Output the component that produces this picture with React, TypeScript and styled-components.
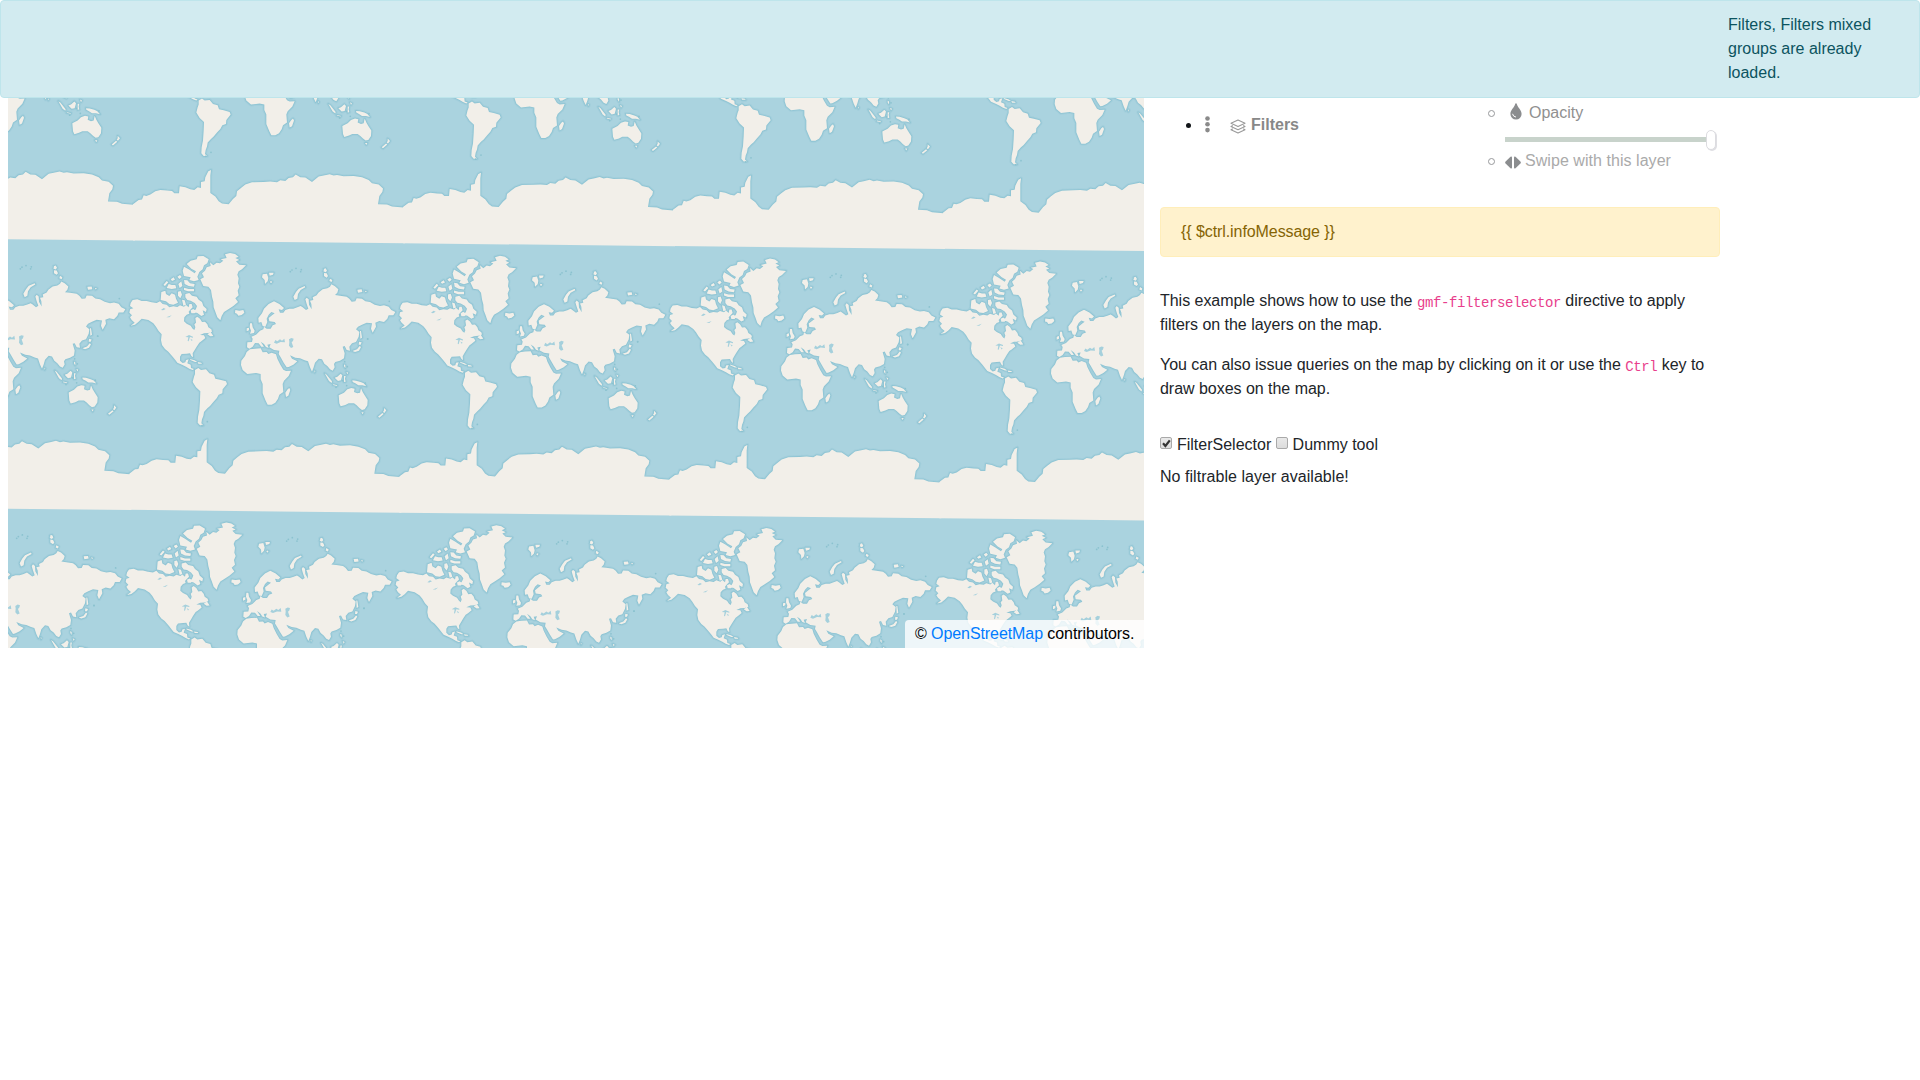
import React from "react";
import styled, { createGlobalStyle } from "styled-components";

const GlobalStyle = createGlobalStyle`
  *, *::before, *::after { box-sizing: border-box; }
  html, body { margin: 0; padding: 0; background: #fff; }
  body {
    font-family: "Liberation Sans", Arial, sans-serif;
    font-size: 16px;
    line-height: 24px;
    color: #212529;
  }
`;

const Page = styled.div`
  display: flex;
  gap: 16px;
  padding-left: 8px;
`;

const Notification = styled.div`
  position: fixed;
  top: 0;
  left: 0;
  right: 0;
  z-index: 10;
  display: flex;
  justify-content: flex-end;
  padding: 12px 20px 12px 0;
  border: 1px solid #bee5eb;
  border-radius: 4px;
  background: #d2ebf0;
  color: #0c5460;
`;

const NotificationText = styled.div`
  width: 171px;
`;

const MapPane = styled.div`
  position: relative;
  flex: none;
  width: 1136px;
  height: 648px;
  overflow: hidden;
  background: #aad3df;
`;

const MapCanvas = styled.svg`
  display: block;
`;

const Attribution = styled.div`
  position: absolute;
  right: 0;
  bottom: 0;
  height: 28px;
  width: 239px;
  padding: 2px 0 2px 10px;
  border-radius: 4px 0 0 0;
  background: rgba(255, 255, 255, 0.8);
  color: #000;
  letter-spacing: -0.08px;
  white-space: nowrap;
`;

const Link = styled.a`
  color: #007bff;
  text-decoration: none;
`;

const Side = styled.div`
  display: flex;
  flex-direction: column;
  width: 560px;
  padding-top: 101px;
`;

const LayerTree = styled.div`
  display: flex;
  justify-content: space-between;
  height: 106px;
`;

const TreeRow = styled.div`
  display: flex;
  align-items: center;
  height: 24px;
  margin-top: 12px;
  padding-left: 26px;
`;

const Disc = styled.span`
  width: 5px;
  height: 5px;
  border-radius: 50%;
  background: #111518;
`;

const DotsIcon = styled.svg`
  width: 5px;
  height: 17px;
  margin: -1px 0 0 14px;
`;

const StackIcon = styled.svg`
  width: 16px;
  height: 15px;
  margin: 2px 5px 0 20px;
`;

const GroupName = styled.span`
  font-weight: 700;
  color: #888;
`;

const Options = styled.div`
  display: flex;
  flex-direction: column;
  width: 232px;
`;

const OptionRow = styled.div<{ $color: string; $spacing?: number }>`
  display: flex;
  align-items: center;
  height: 24px;
  color: ${(p) => p.$color};
  letter-spacing: ${(p) => p.$spacing ?? 0}px;
`;

const Ring = styled.span`
  flex: none;
  width: 7px;
  height: 7px;
  margin-top: 1px;
  border: 1px solid #97999b;
  border-radius: 50%;
`;

const DropIcon = styled.svg`
  width: 12px;
  height: 17px;
  margin: -3px 7px 0 15px;
`;

const SwipeIcon = styled.svg`
  width: 16px;
  height: 13px;
  margin: 2px 4px 0 10px;
`;

const Slider = styled.div`
  display: flex;
  align-items: center;
  height: 24px;
  margin-left: 17px;
  padding-top: 5px;
`;

const Track = styled.div`
  width: 201px;
  height: 5px;
  background: #c8d3cb;
`;

const Thumb = styled.div`
  width: 10px;
  height: 20px;
  margin-top: 1px;
  border: 1px solid #dcdce0;
  border-radius: 5px;
  background: #fff;
  box-shadow: 1px 1px 0 #dfdfe3;
`;

const Warning = styled.div`
  height: 50px;
  padding: 12px 20px;
  border: 1px solid #ffeeba;
  border-radius: 4px;
  background: #fff2cd;
  color: #856404;
  letter-spacing: -0.08px;
`;

const Description = styled.div`
  display: flex;
  flex-direction: column;
  gap: 16px;
  margin-top: 32px;
`;

const Paragraph = styled.p`
  margin: 0;
  letter-spacing: -0.03px;
`;

const Code = styled.code`
  position: relative;
  top: 0.5px;
  font-family: "Liberation Mono", monospace;
  font-size: 14px;
  line-height: 1;
  letter-spacing: -0.4px;
  color: #e83e8c;
`;

const Tools = styled.div`
  margin-top: 32px;
  height: 32px;
`;

const Checkbox = styled.input`
  position: relative;
  top: -1px;
  appearance: none;
  width: 12px;
  height: 12px;
  margin: 0 0.5px 0 0;
  vertical-align: baseline;
  border: 1px solid #a9a9a9;
  border-radius: 2px;
  background: linear-gradient(#e9e9e9, #dcdcdc);
`;

const CheckSlot = styled.span`
  position: relative;
`;

const CheckMark = styled.svg`
  position: absolute;
  left: 1px;
  top: 2px;
  width: 11px;
  height: 11px;
  pointer-events: none;
`;

const Result = styled.div`
  letter-spacing: 0.04px;
`;

const NORTH_AMERICA =
  "M392,219L398,210 412,208 425,213 440,213 455,217 470,219 480,214 488,222 500,224 508,232 520,229 532,231 540,226 552,230 558,225 566,232 568,222 575,222 578,232 572,238 566,245 568,251 560,254 553,262 552,274 560,281 572,287 578,296 583,300 586,292 583,283 588,278 586,264 592,260 600,266 606,276 615,275 622,283 625,292 634,298 636,305 625,309 612,310 600,315 612,316 616,324 605,333 598,338 590,350 584,360 578,370 579,382 574,378 570,370 560,371 545,372 540,380 540,392 548,399 556,397 558,390 566,388 562,400 572,404 573,414 582,417 578,420 568,416 558,410 546,404 532,398 526,390 518,380 505,365 495,357 486,345 483,330 485,313 476,303 468,290 460,280 445,270 425,266 415,276 405,284 392,287 404,278 395,270 390,262 396,256 388,248 390,238 400,235 390,228Z";
const GREENLAND =
  "M601,148L612,142 606,130 615,122 620,112 632,108 630,97 640,106 650,98 660,100 670,92 662,88 680,84 675,73 690,69 705,72 716,80 706,84 718,90 708,94 718,104 738,106 726,118 716,124 712,134 716,145 714,160 718,170 713,182 716,196 706,205 714,216 700,228 685,238 672,246 665,258 661,271 652,262 646,245 641,232 640,215 636,200 633,180 625,170 610,168Z";
const ARCTIC_ISLANDS =
  "M560,102L572,92 590,88 593,79 610,78 626,88 622,100 612,106 608,118 598,126 592,140 596,150 582,154 568,150 572,142 552,138 548,122 552,110 566,118 584,130 588,124 574,116Z" +
  "M484,186L496,182 498,192 508,198 515,190 525,194 528,206 534,218 520,224 508,222 498,214 482,210Z" +
  "M490,165L500,153 505,157 495,168Z M500,174l6,-12 10,3 10,0 3,10 -14,2z M512,148l9,-6 4,7 -9,4z M532,140l8,-5 5,6 -7,6z M535,162l9,-8 3,14 -8,6z" +
  "M552,150l10,1 8,9 14,2 -2,8 -16,-2 -12,-6z M552,173l14,4 16,0 0,7 -18,0 -12,-4z M534,185l8,-2 4,11 -5,11 -7,-8z M546,209l8,2 4,13 -8,3z" +
  "M556,192L568,189 576,197 590,200 596,209 606,216 610,228 620,237 618,246 608,241 612,254 604,258 592,249 582,246 588,236 591,228 584,219 572,212 562,210 556,202Z M572,241l8,-4 8,6 -4,7 -10,0z" +
  "M622,313l10,-7 8,12 -9,1z M706,240l12,2 12,-2 3,8 -8,7 -10,2 -4,-6 -6,-2z M570,387l14,4 8,5 -7,0 -14,-6z M593,396l11,2 2,3 -11,0z";
const SOUTH_AMERICA =
  "M585,420L595,414 603,420 618,418 628,430 642,434 646,446 660,449 678,454 681,462 668,478 667,490 656,494 650,505 640,516 630,528 622,535 612,546 610,558 606,568 604,580 610,586 600,586 593,578 594,560 598,540 600,510 601,484 588,472 578,456 582,440 585,432Z";
const AFRICA =
  "M750,358L765,356 782,355 788,367 800,366 805,372 815,368 828,373 832,386 841,404 850,419 858,423 873,422 866,438 852,452 848,462 850,486 838,494 834,506 826,518 815,524 803,524 797,512 788,490 788,462 782,448 782,432 768,429 742,432 728,420 723,405 724,392 735,378 740,366Z M858,501L856,488 863,478 868,474 871,480 865,497Z";
const EURASIA =
  "M741,352L742,337 756,336 758,326 754,320 768,314 780,302 790,298 792,290 800,296 812,296 818,286 828,282 824,276 808,274 806,264 816,256 824,250 814,246 806,254 800,266 802,276 796,290 788,288 784,276 776,278 775,264 786,250 792,236 806,222 822,214 838,222 852,234 846,240 836,238 840,248 850,248 856,240 868,236 880,236 892,232 902,228 908,232 918,240 925,236 920,222 916,208 920,203 926,208 927,224 935,238 934,222 930,212 940,210 938,202 950,196 955,188 968,178 982,175 990,170 994,163 1004,168 1015,178 1012,188 1005,195 1020,197 1040,200 1048,206 1055,215 1066,214 1070,205 1086,206 1096,214 1110,216 1124,224 1140,228 1152,226 1166,230 1174,240 1186,246 1180,256 1166,256 1162,266 1152,276 1138,273 1126,278 1128,290 1118,308 1113,296 1116,280 1100,278 1086,284 1074,290 1068,298 1078,306 1076,320 1068,336 1056,340 1048,350 1050,362 1040,360 1034,348 1028,350 1034,370 1032,385 1020,392 1006,396 1002,402 1004,412 998,422 990,418 982,408 973,401 966,388 956,386 945,398 941,412 936,425 930,412 924,394 914,391 900,385 886,383 870,376 876,386 892,394 880,404 866,411 860,412 851,398 842,382 836,372 838,362 822,360 808,352 812,342 802,344 806,354 798,351 792,342 782,335 792,350 784,350 776,340 765,339 758,350 748,356Z" +
  "M750,280l6,0 2,12 6,10 -2,7 -12,2 3,-9 -4,-10z M740,295l7,-2 0,8 -7,3z";
const NORTHERN_ISLANDS =
  "M788,133l13,-2 4,13 -2,10 -8,8 -1,-12 -8,-8z M807,128l14,0 -2,6 -10,3z M812,153l5,2 -4,5 -3,-4z" +
  "M884,210L880,200 888,186 896,176 914,168 916,172 902,180 894,192 892,206Z" +
  "M972,119l-1,-2 6,-2 4,7 -4,5 -7,-3z M972,129l8,1 4,8 -4,5 -8,-5z M990,146l7,4 -2,6 -7,-3z M1072,179l13,-1 2,8 -13,2z M1094,182l7,2 -4,3z";
const ASIA_PACIFIC =
  "M1080,303l3,0 3,20 -5,3z M1077,335l8,2 -3,7 -6,0z M1079,348l4,3 -6,11 -12,4 -8,-3 14,-5z M1032,403l4,3 0,9 -4,-6z M1039,425l6,3 -3,5z" +
  "M974,430l6,4 16,20 -1,5 -8,-6z M1000,463l12,3 -1,2 -12,-3z M1004,443l8,-3 10,-9 5,5 -4,15 -9,2z M1032,438l5,0 -2,8 2,9 -5,1z M1057,451l11,1 14,4 9,4 8,9 -12,-3 -12,0 -9,-6 -8,-4z M943,421l3,3 -2,4z" +
  "M1016,496L1032,488 1042,478 1054,474 1064,476 1062,486 1072,490 1080,488 1083,474 1088,486 1094,496 1103,510 1102,526 1094,538 1086,540 1078,534 1070,526 1062,520 1046,520 1036,525 1022,529 1018,520Z" +
  "M1084,547l7,0 -3,6z M1152,534l7,7 -6,8 -4,-3 3,-5z M1134,560l13,-11 4,3 -13,11z";
const ANTARCTIC_COAST =
  "M388,731L405,718 415,717 420,704 428,706 440,702 455,692 470,688 490,690 505,691 512,698 526,698 528,677 545,680 560,686 572,688 582,680 592,682 592,664 603,662 605,650 614,632 622,628 620,645 620,697 635,708 645,722 655,729 675,731 688,715 698,706 700,692 712,682 725,672 745,665 780,664 800,663 820,665 830,659 845,661 855,652 868,650 876,642 890,650 905,651 925,664 945,648 960,645 978,641 990,645 1000,643 1020,647 1050,646 1075,650 1095,658 1105,668 1125,672 1138,684 1136,694 1127,706 1123,731 1150,732 1165,738 1199,741";
const CONTINENTS = [
  NORTH_AMERICA, GREENLAND, ARCTIC_ISLANDS, SOUTH_AMERICA, AFRICA,
  EURASIA, NORTHERN_ISLANDS, ASIA_PACIFIC,
].join("");
const COASTS = CONTINENTS + ANTARCTIC_COAST;
const LAND = CONTINENTS + ANTARCTIC_COAST + "L1204,741 1204,848.2 388,839.6Z";
const LAKES =
  "M822,338L826,330 832,334 840,328 846,332 853,326 855,337 842,336 830,341Z M867,328l7,-4 7,2 -2,7 -4,4 5,14 -7,3 -6,-7 1,-11z" +
  "M556,321l11,-6 12,5 0,3 -9,-2 -2,6 -2,7 -3,-1 2,-11z M571,326l7,4 -3,3z M483,240l8,-6 6,3 -8,4z M499,262l16,-6 -7,6z";
const SPECKS: [number, number][] = [
  [622, 575], [293, 318], [1103, 327], [1034, 395], [1168, 214], [871, 125], [876, 120], [888, 115],
  [904, 119], [902, 125], [606, 587], [1040, 467], [1096, 459], [1042, 410], [1028, 452], [1008, 472],
];

const TILES = [-1, 0, 1].flatMap((row) =>
  [-1, 0, 1, 2, 3].map((col) => ({
    key: `${row}:${col}`,
    x: col * 810 - row * 11,
    y: col * 8.4 + row * 808.2,
  }))
);

function WorldMap() {
  return (
    <MapCanvas width={1136} height={648} viewBox="24 -690 3408 1944">
      <defs>
        <path id="coasts" d={COASTS} />
        <path id="land" d={LAND} />
        <g id="specks">
          {SPECKS.map(([x, y]) => (
            <circle key={`${x}-${y}`} cx={x} cy={y} r={2.6} />
          ))}
        </g>
        <path id="lakes" d={LAKES} />
      </defs>
      <g fill="none" stroke="#8fc5d4" strokeLinejoin="round">
        {TILES.map((t) => (
          <use key={t.key} href="#coasts" x={t.x} y={t.y} strokeWidth={11} strokeOpacity={0.3} />
        ))}
        {TILES.map((t) => (
          <use key={t.key} href="#coasts" x={t.x} y={t.y} strokeWidth={5} stroke="#7dbccd" strokeOpacity={0.5} />
        ))}
      </g>
      <g fill="#f2efe9">
        {TILES.map((t) => (
          <use key={t.key} href="#land" x={t.x} y={t.y} />
        ))}
      </g>
      {TILES.map((t) => (
        <g key={t.key}>
          <use href="#specks" x={t.x} y={t.y} fill="#8bc2cf" />
          <use href="#lakes" x={t.x} y={t.y} fill="#a5d0dc" />
        </g>
      ))}
    </MapCanvas>
  );
}

export default function App() {
  return (
    <>
      <GlobalStyle />
      <Notification>
        <NotificationText>Filters, Filters mixed groups are already loaded.</NotificationText>
      </Notification>
      <Page>
        <MapPane>
          <WorldMap />
          <Attribution>
            © <Link>OpenStreetMap</Link> contributors.
          </Attribution>
        </MapPane>
        <Side>
          <LayerTree>
            <TreeRow>
              <Disc />
              <DotsIcon viewBox="0 0 5 17" fill="#8a8a8a">
                <circle cx="2.5" cy="2.5" r="2.3" />
                <circle cx="2.5" cy="8.3" r="2.3" />
                <circle cx="2.5" cy="14.1" r="2.3" />
              </DotsIcon>
              <StackIcon viewBox="0 0 16 15" fill="none" stroke="#9a9a9a" strokeWidth="1.1" strokeLinejoin="round">
                <path d="M8 1 15 4.3 8 7.6 1 4.3Z" />
                <path d="M2.8 6.6 1 7.5 8 10.8 15 7.5 13.2 6.6" />
                <path d="M2.8 9.8 1 10.7 8 14 15 10.7 13.2 9.8" />
              </StackIcon>
              <GroupName>Filters</GroupName>
            </TreeRow>
            <Options>
              <OptionRow $color="#909090">
                <Ring />
                <DropIcon viewBox="0 0 12 17">
                  <path fill="#8b8d8f" d="M6 .3C6.5.3 6.7.7 6.8 1.1 7.7 4.7 11.6 7 11.6 11A5.6 5.6 0 0 1 .4 11C.4 7 4.3 4.7 5.2 1.1 5.3.7 5.5.3 6 .3Z" />
                  <path fill="none" stroke="#fff" strokeLinecap="round" d="M2.6 11.2Q3 13.7 5.6 14" />
                </DropIcon>
                Opacity
              </OptionRow>
              <Slider>
                <Track />
                <Thumb />
              </Slider>
              <OptionRow $color="#aaa" $spacing={0.05}>
                <Ring />
                <SwipeIcon viewBox="0 0 16 13" fill="#8b8d8f">
                  <path d="M5.5.8Q7 .1 7 1.5V11.5Q7 12.9 5.5 12.2L.6 7.4Q-.3 6.5.6 5.6Z" />
                  <path d="M10.5.8Q9 .1 9 1.5V11.5Q9 12.9 10.5 12.2L15.4 7.4Q16.3 6.5 15.4 5.6Z" />
                </SwipeIcon>
                Swipe with this layer
              </OptionRow>
            </Options>
          </LayerTree>
          <Warning>{"{{ $ctrl.infoMessage }}"}</Warning>
          <Description>
            <Paragraph>
              This example shows how to use the <Code>gmf-filterselector</Code> directive to apply filters on the
              layers on the map.
            </Paragraph>
            <Paragraph>
              You can also issue queries on the map by clicking on it or use the <Code>Ctrl</Code> key to draw boxes
              on the map.
            </Paragraph>
          </Description>
          <Tools>
            <CheckSlot>
              <Checkbox type="checkbox" defaultChecked />
              <CheckMark viewBox="0 0 11 11" fill="none" stroke="#333" strokeWidth="2.2">
                <path d="M2 5.3 4.4 8 8.8 2.3" />
              </CheckMark>
            </CheckSlot>{" "}
            FilterSelector <Checkbox type="checkbox" /> Dummy tool
          </Tools>
          <Result>No filtrable layer available!</Result>
        </Side>
      </Page>
    </>
  );
}
